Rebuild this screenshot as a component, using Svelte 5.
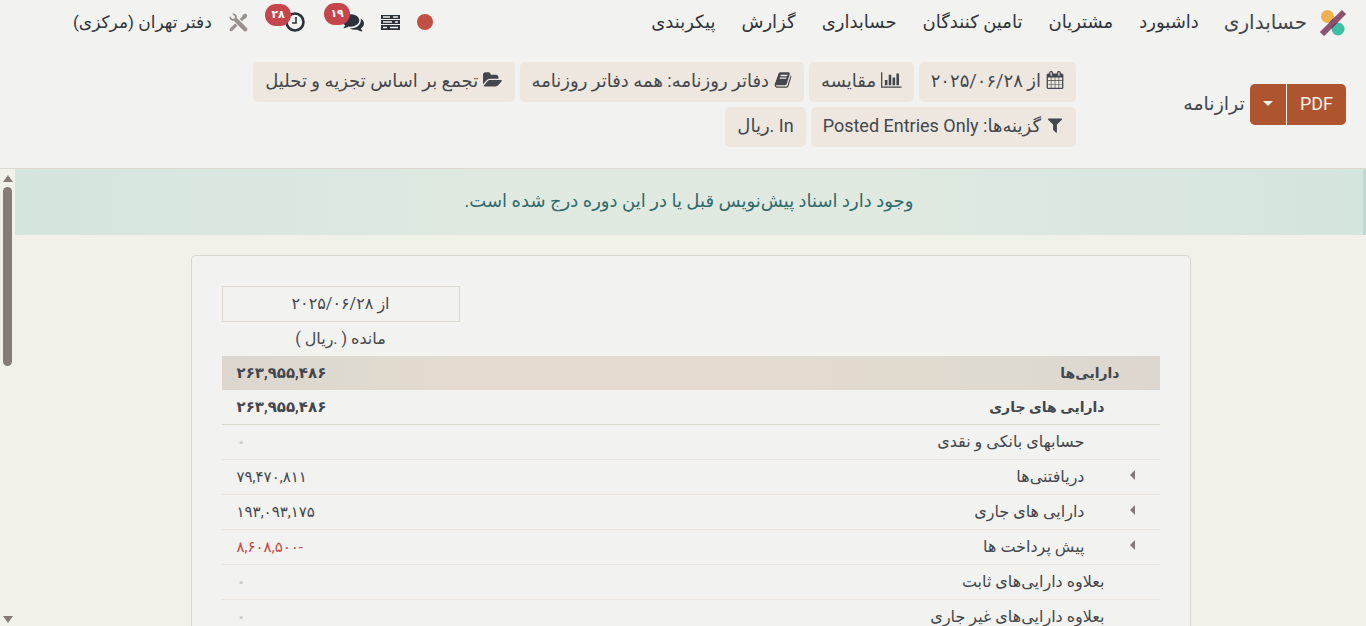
<script lang="ts">
	type Row = { name: string; value: string; kind: 'title' | 'total' | 'account' | 'group'; unfold?: boolean };

	const menus = ['داشبورد', 'مشتریان', 'تامین کنندگان', 'حسابداری', 'گزارش', 'پیکربندی'];

	const icons = {
		calendar: {
			width: 1792,
			d: 'M192 1664h288v-288h-288v288zm352 0h320v-288h-320v288zm-352-352h288v-320h-288v320zm352 0h320v-320h-320v320zm-352-384h288v-288h-288v288zm736 736h320v-288h-320v288zm-384-736h320v-288h-320v288zm768 736h288v-288h-288v288zm-384-352h320v-320h-320v320zm-352-864v-288q0-13-9.5-22.5t-22.5-9.5h-64q-13 0-22.5 9.5t-9.5 22.5v288q0 13 9.5 22.5t22.5 9.5h64q13 0 22.5-9.5t9.5-22.5zm736 864h288v-320h-288v320zm-384-384h320v-288h-320v288zm384 0h288v-288h-288v288zm32-480v-288q0-13-9.5-22.5t-22.5-9.5h-64q-13 0-22.5 9.5t-9.5 22.5v288q0 13 9.5 22.5t22.5 9.5h64q13 0 22.5-9.5t9.5-22.5zm384-64v1280q0 52-38 90t-90 38h-1408q-52 0-90-38t-38-90v-1280q0-52 38-90t90-38h128v-96q0-66 47-113t113-47h64q66 0 113 47t47 113v96h384v-96q0-66 47-113t113-47h64q66 0 113 47t47 113v96h128q52 0 90 38t38 90z'
		},
		chart: {
			width: 2048,
			d: 'M640 896v512h-256v-512h256zm384-512v1024h-256v-1024h256zm1024 1152v128h-2048v-1536h128v1408h1920zm-640-896v768h-256v-768h256zm384-384v1152h-256v-1152h256z'
		},
		book: {
			width: 1792,
			d: 'M1703 478q40 57 18 129l-275 906q-19 64-76.5 107.5t-122.5 43.5h-923q-77 0-148.5-53.5t-99.5-131.5q-24-67-2-127 0-4 3-27t4-37q1-8-3-21.5t-3-19.5q2-11 8-21t16.5-23.5 16.5-23.5q23-38 45-91.5t30-91.5q3-10 .5-30t-.5-28q3-11 17-28t17-23q21-36 42-92t25-90q1-9-2.5-32t.5-28q4-13 22-30.5t22-22.5q19-26 42.5-84.5t27.5-96.5q1-8-3-25.5t-2-26.5q2-8 9-18t18-23 17-21q8-12 16.5-30.5t15-35 16-36 19.5-32 26.5-23.5 36-11.5 47.5 5.5l-1 3q38-9 51-9h761q74 0 114 56t18 130l-274 906q-36 119-71.5 153.5t-128.5 34.5h-869q-27 0-38 15-11 16-1 43 24 70 144 70h923q29 0 56-15.5t35-41.5l300-987q7-22 5-57 38 15 59 43zm-1064 2q-4 13 2 22.5t20 9.5h608q13 0 25.5-9.5t16.5-22.5l21-64q4-13-2-22.5t-20-9.5h-608q-13 0-25.5 9.5t-16.5 22.5zm-83 256q-4 13 2 22.5t20 9.5h608q13 0 25.5-9.5t16.5-22.5l21-64q4-13-2-22.5t-20-9.5h-608q-13 0-25.5 9.5t-16.5 22.5z'
		},
		folder: {
			width: 1920,
			d: 'M1879 952q0 31-31 66l-336 396q-43 51-120.5 86.5t-143.5 35.5h-1088q-34 0-60.5-13t-26.5-43q0-31 31-66l336-396q43-51 120.5-86.5t143.5-35.5h1088q34 0 60.5 13t26.5 43zm-343-344v160h-832q-94 0-197 47.5t-164 119.5l-337 396-5 6q0-4-.5-12.5t-.5-12.5v-960q0-92 66-158t158-66h320q92 0 158 66t66 158v32h544q92 0 158 66t66 158z'
		},
		filter: {
			width: 1792,
			d: 'M1595 295q17 41-14 70l-493 493v742q0 42-39 59-13 5-25 5-27 0-45-19l-256-256q-19-19-19-45v-486l-493-493q-31-29-14-70 17-39 59-39h1280q42 0 59 39z'
		}
	};

	const filters: { label: string; icon?: keyof typeof icons }[] = [
		{ icon: 'calendar', label: 'از ۲۰۲۵/۰۶/۲۸' },
		{ icon: 'chart', label: 'مقایسه' },
		{ icon: 'book', label: 'دفاتر روزنامه: همه دفاتر روزنامه' },
		{ icon: 'folder', label: 'تجمع بر اساس تجزیه و تحلیل' },
		{ icon: 'filter', label: 'گزینه‌ها: Posted Entries Only' },
		{ label: 'In .ریال' }
	];

	const rows: Row[] = [
		{ name: 'دارایی‌ها', value: '۲۶۳,۹۵۵,۴۸۶', kind: 'title' },
		{ name: 'دارایی های جاری', value: '۲۶۳,۹۵۵,۴۸۶', kind: 'total' },
		{ name: 'حسابهای بانکی و نقدی', value: '۰', kind: 'account' },
		{ name: 'دریافتنی‌ها', value: '۷۹,۴۷۰,۸۱۱', kind: 'account', unfold: true },
		{ name: 'دارایی های جاری', value: '۱۹۳,۰۹۳,۱۷۵', kind: 'account', unfold: true },
		{ name: 'پیش پرداخت ها', value: '-۸,۶۰۸,۵۰۰', kind: 'account', unfold: true },
		{ name: 'بعلاوه دارایی‌های ثابت', value: '۰', kind: 'group' },
		{ name: 'بعلاوه دارایی‌های غیر جاری', value: '۰', kind: 'group' }
	];
</script>

<div class="web-client" dir="rtl" lang="fa">
	<header class="navbar">
		<a href="#apps" class="brand">
			<svg width="28" height="28" viewBox="0 0 28 28" aria-hidden="true">
				<clipPath id="brand-dots">
					<circle cx="8.5" cy="8.5" r="6.5" />
					<circle cx="19" cy="21" r="6.5" />
				</clipPath>
				<circle cx="8.5" cy="8.5" r="6.5" fill="#efb050" />
				<circle cx="19" cy="21" r="6.5" fill="#40bfa4" />
				<path d="M3 26 25 4" stroke="#8c5370" stroke-width="6" />
				<path d="M3 26 25 4" stroke="#6f3754" stroke-width="6" clip-path="url(#brand-dots)" />
			</svg>
			<span>حسابداری</span>
		</a>
		<nav class="menu">
			{#each menus as menu}
				<a href="#menu">{menu}</a>
			{/each}
		</nav>

		<div class="systray">
			<button class="tray-item" aria-label="وضعیت">
				<svg width="16" height="16" viewBox="0 0 16 16"><circle cx="8" cy="8" r="8" fill="#c05044" /></svg>
			</button>
			<button class="tray-item" aria-label="صف">
				<svg width="19" height="15" viewBox="0 0 19 15">
					<path d="M0 0h19v4H0zM0 5h19v4H0zM0 10h19v5H0z" fill="#2b323b" />
					<path d="M2 2h7M12 2h5M2 7h9M14 7h3M2 12.5h4M9 12.5h8" stroke="#f2f2f0" stroke-width="1.4" />
				</svg>
			</button>
			<button class="tray-item counted" aria-label="پیام‌ها">
				<svg width="22" height="22" viewBox="0 0 1792 1792" fill="#2b323b">
					<path d="M1408 768q0 139-94 257t-256.500 186.500-353.500 68.500q-86 0-176-16-124 88-278 128-36 9-86 16h-3q-11 0-20.500-8t-11.500-21q-1-3-1-6.500t.5-6.500 2-6l2.500-5 3.500-5.500 4-5 4.500-5 4-4.500q5-6 23-25t26-29.500 22.500-29 25-38.500 20.500-44q-124-72-195-177t-71-224q0-139 94-257t256.500-186.500 353.500-68.500 353.500 68.500 256.500 186.500 94 257zm384 256q0 120-71 224.500t-195 176.500q10 24 20.500 44t25 38.500 22.500 29 26 29.500 23 25q1 1 4 4.500t4.500 5 4 5 3.500 5.500l2.500 5 2 6 .5 6.500-1 6.500q-3 14-13 22t-22 7q-50-7-86-16-154-40-278-128-90 16-176 16-271 0-472-132 58 4 88 4 161 0 309-45t264-129q125-92 192-212t67-254q0-77-23-152 129 71 204 178t75 230z" />
				</svg>
				<span class="badge">۱۹</span>
			</button>
			<button class="tray-item counted" aria-label="فعالیت‌ها">
				<svg width="20" height="20" viewBox="0 0 20 20" fill="none" stroke="#2b323b">
					<circle cx="10" cy="10" r="8.5" stroke-width="2.6" />
					<path d="M11 5v6H7" stroke-width="1.6" />
				</svg>
				<span class="badge">۲۸</span>
			</button>
			<button class="tray-item" aria-label="ابزارها">
				<svg width="19" height="19" viewBox="0 0 19 19" fill="#98918d">
					<path d="M3.2.8 6 3.6 5.6 5.600 3.600 6 .8 3.200C-.2 5.600 1.800 8.400 4.800 7.800L14.900 18c2 1.600 4.600-1 3-3L7.800 4.800C8.400 1.800 5.600-.2 3.200.8z" />
					<path d="M16.6.6 18.4 2.400 17.200 5 15.200 6 13 8.200 10.800 6 13 3.800 14 1.800zM6.200 10.600l2.200 2.200-5 5c-2 1.400-3.600-.4-2.400-2.200z" />
				</svg>
			</button>
			<button class="company">دفتر تهران (مرکزی)</button>
		</div>
	</header>

	<section class="control-panel">
		<div class="heading">
			<div class="btn-group">
				<button class="btn-primary">PDF</button>
				<button class="btn-primary toggle" aria-label="گزینه‌های دیگر"><span class="caret-down"></span></button>
			</div>
			<h1>ترازنامه</h1>
		</div>
		<div class="filters">
			{#each filters as filter}
				<button class="filter">
					{#if filter.icon}
						<svg height="18" viewBox="0 0 {icons[filter.icon].width} 1792" aria-hidden="true">
							<path d={icons[filter.icon].d} />
						</svg>
					{/if}
					<span>{filter.label}</span>
				</button>
			{/each}
		</div>
	</section>

	<div class="content">
		<main>
			<a class="draft-alert" href="#draft">وجود دارد اسناد پیش‌نویس قبل یا در این دوره درج شده است.</a>

			<div class="report">
				<table>
					<thead>
						<tr>
							<td></td>
							<th class="period" scope="col">از ۲۰۲۵/۰۶/۲۸</th>
						</tr>
						<tr>
							<td></td>
							<th scope="col">مانده ( .ریال )</th>
						</tr>
					</thead>
					<tbody>
						{#each rows as row}
							<tr class={row.kind}>
								<td class="name">
									{#if row.unfold}
										<button class="unfold" aria-label="باز کردن {row.name}"><span class="caret-left"></span></button>
									{/if}
									{row.name}
								</td>
								<td
									class="value"
									class:muted={row.value === '۰'}
									class:negative={row.value.startsWith('-')}
								>{row.value}</td>
							</tr>
						{/each}
					</tbody>
				</table>
			</div>
		</main>

		<div class="scrollbar" aria-hidden="true">
			<span class="arrow up"></span>
			<span class="thumb"></span>
			<span class="arrow down"></span>
		</div>
	</div>
</div>

<style>
	:global(body) {
		background: #f1f1ea;
	}

	.web-client {
		display: flex;
		flex-direction: column;
		height: 100vh;
		overflow: hidden;
		color: #43474d;
		font-family: Roboto, 'DejaVu Sans', sans-serif;
		font-size: 18px;
	}

	button {
		margin: 0;
		padding: 0;
		border: none;
		background: none;
		color: inherit;
		font: inherit;
		cursor: pointer;
	}

	a {
		color: inherit;
		text-decoration: none;
	}

	svg {
		display: block;
		flex: none;
	}

	/* Navbar */
	.navbar {
		display: flex;
		flex: none;
		align-items: center;
		height: 44px;
		padding: 0 19px 0 73px;
		background: #f2f2f0;
		color: #30343a;
		white-space: nowrap;
	}

	.brand {
		display: flex;
		align-items: center;
		gap: 12px;
		margin-left: 12px;
		color: #43474d;
		font-size: 20px;
	}

	.menu {
		display: flex;
	}

	.menu a {
		padding: 0 13px 2px;
	}

	.systray {
		display: flex;
		align-items: center;
		gap: 17px;
		margin-right: auto;
	}

	.tray-item {
		position: relative;
	}

	/* room for the badge that hangs over the icon */
	.counted {
		margin-left: 20px;
	}

	.badge {
		position: absolute;
		top: -8px;
		right: 14px;
		padding: 0 6px;
		border-radius: 11px;
		background: #c5454c;
		color: #fff;
		font-size: 11px;
		font-weight: 700;
		line-height: 22px;
	}

	.company {
		font-size: 17px;
	}

	/* Control panel */
	.control-panel {
		display: flex;
		flex: none;
		height: 124px;
		padding: 0 20px;
		border-bottom: 1px solid #ddd8d0;
		background: #f2f2f0;
	}

	.heading {
		display: flex;
		flex: 0 0 270px;
		align-items: center;
		align-self: flex-start;
		gap: 5px;
		margin-top: 40px;
	}

	h1 {
		margin: 0;
		padding-bottom: 3px;
		font-size: 19px;
		font-weight: 400;
	}

	.btn-group {
		display: flex;
		gap: 1px;
	}

	.btn-primary {
		height: 41px;
		padding: 0 13px 2px;
		border-radius: 0 5px 5px 0;
		background: #ae552f;
		color: #f6efea;
	}

	.toggle {
		border-radius: 5px 0 0 5px;
	}

	.caret-down {
		display: block;
		border: 5px solid transparent;
		border-top-color: currentColor;
		border-bottom: none;
	}

	.filters {
		display: flex;
		flex: 1;
		flex-wrap: wrap;
		align-content: flex-start;
		gap: 5px;
		margin-top: 18px;
		margin-left: 155px;
	}

	.filter {
		display: flex;
		align-items: center;
		gap: 5px;
		height: 40px;
		padding: 0 12px 4px;
		border-radius: 5px;
		background: #eee7df;
		white-space: nowrap;
	}

	.filter svg {
		fill: currentColor;
	}

	/* Report */
	.content {
		display: flex;
		flex: 1;
		min-height: 0;
	}

	main {
		flex: 1;
		overflow: hidden;
	}

	.draft-alert {
		display: block;
		padding-bottom: 2px;
		border-right: 3px solid #bfd9d5;
		background: linear-gradient(to right, #d4e5de, #dfe9e0 35%, #dfe9e0 65%, #d4e5de);
		color: #2f6a6c;
		line-height: 64px;
		text-align: center;
	}

	.report {
		max-width: 938px;
		margin: 20px auto 0;
		padding: 30px;
		border: 1px solid #dbd6cf;
		border-radius: 5px;
		background: #f2f2f0;
	}

	table {
		width: 100%;
		border-spacing: 0;
		font-size: 16px;
		line-height: 20px;
		table-layout: fixed;
	}

	th,
	td {
		box-sizing: border-box;
		height: 35px;
		padding: 0 15px 1px;
	}

	th {
		width: 238px;
		height: 34px;
		font-weight: 400;
	}

	thead td {
		height: 34px;
	}

	.period {
		height: 36px;
		border: 1px solid #ddd8ce;
	}

	tbody td {
		border-bottom: 1px solid #e9e5de;
	}

	.title td {
		height: 34px;
		border-bottom: none;
		font-weight: 700;
	}

	.title td.name {
		padding-right: 40px;
		background: linear-gradient(to right, #e4dad0 40%, #dedacf 80%, #dcd6cf);
	}

	.title td.value {
		background: linear-gradient(to right, #dcd6cf, #dfdacf 60%, #e4dad0);
	}

	.total td {
		border-bottom-color: #dbd8ce;
		font-weight: 700;
	}

	.title .name,
	.total .name {
		font-size: 14px;
	}

	.name {
		position: relative;
	}

	.total .name,
	.group .name {
		padding-right: 55px;
	}

	.account .name {
		padding-right: 75px;
	}

	.unfold {
		position: absolute;
		top: 6px;
		right: 19px;
		padding: 4px 6px;
	}

	.caret-left {
		display: block;
		border: 5px solid transparent;
		border-right-color: #827a77;
		border-left: none;
	}

	.value {
		font-size: 15px;
		text-align: left;
	}

	.muted {
		color: #d0c8bb;
		font-weight: 700;
	}

	.negative {
		color: #c04a41;
	}

	/* Scrollbar */
	.scrollbar {
		display: flex;
		flex-direction: column;
		align-items: center;
		width: 15px;
		padding: 6px 0 3px;
		box-sizing: border-box;
	}

	.thumb {
		width: 9px;
		height: 40%;
		margin: 5px 0 auto;
		border-radius: 5px;
		background: #857c78;
	}

	.arrow {
		border: 5px solid transparent;
	}

	.up {
		border-top: none;
		border-bottom: 7px solid #857c78;
	}

	.down {
		border-top: 7px solid #857c78;
		border-bottom: none;
	}
</style>
